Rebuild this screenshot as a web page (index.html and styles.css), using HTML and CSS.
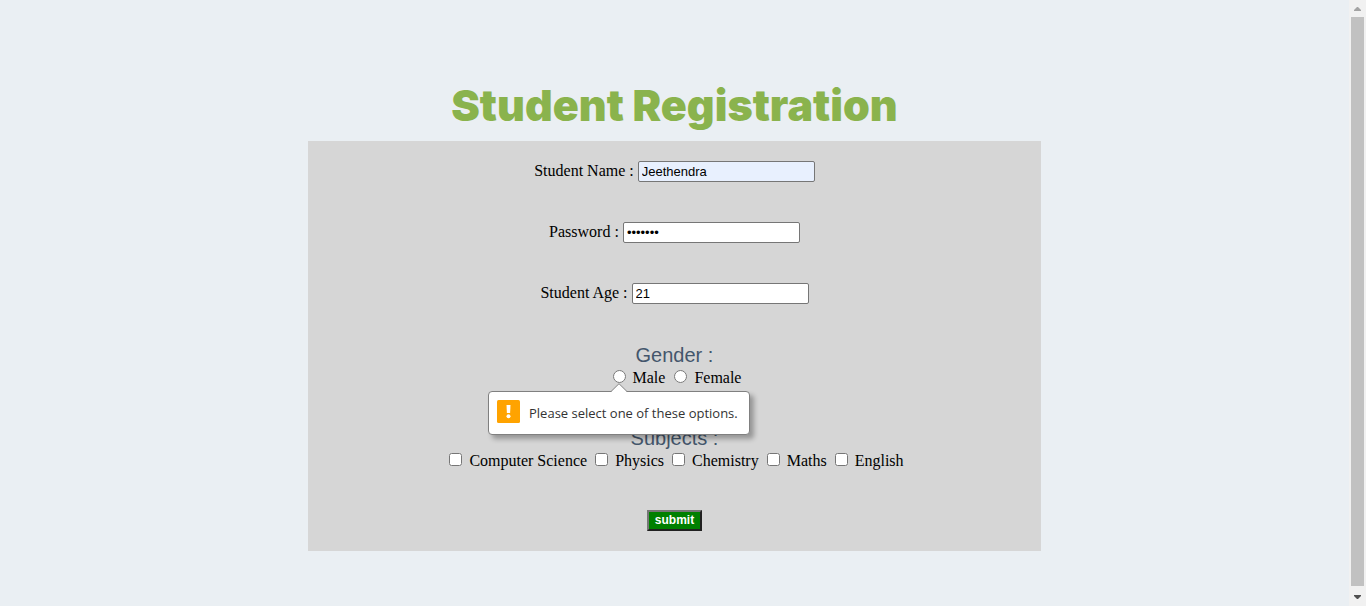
FILE: index.html
```html
<!DOCTYPE html>
<html lang="en">
<head>
<meta charset="utf-8">
<title>Student Registration</title>
<link rel="stylesheet" href="styles.css">
</head>
<body>
<div class="viewport">
  <main class="page">
    <h1 class="title">Student Registration</h1>
    <form class="form">
      <div class="field">
        <label for="name">Student Name :</label>
        <input class="text-input autofilled" id="name" type="text" value="Jeethendra">
      </div>
      <div class="field">
        <label for="password">Password :</label>
        <input class="text-input" id="password" type="password" value="1234567">
      </div>
      <div class="field">
        <label for="age">Student Age :</label>
        <input class="text-input" id="age" type="text" value="21">
      </div>
      <div class="group" role="radiogroup" aria-labelledby="gender-title">
        <div class="group-title" id="gender-title">Gender :</div>
        <div class="options">
          <span class="anchor">
            <input type="radio" name="gender" id="male">
            <span class="bubble" role="alert">
              <svg class="bubble-arrow" width="18" height="9" viewBox="0 0 18 9" aria-hidden="true">
                <path d="M1 9L9 1L17 9Z" fill="#fff"/>
                <path d="M1 8.5L9 .7L17 8.5" fill="none" stroke="#888"/>
              </svg>
              <svg class="bubble-icon" width="23" height="23" viewBox="0 0 23 23" aria-hidden="true">
                <rect width="23" height="23" rx="1.5" fill="#ffa300"/>
                <path d="M9.5 5H13.5L13.1 13H9.9Z" fill="#fff"/>
                <circle cx="11.5" cy="16.3" r="2" fill="#fff"/>
              </svg>
              <span>Please select one of these options.</span>
            </span>
          </span>
          <label for="male">Male</label>
          <input type="radio" name="gender" id="female">
          <label for="female">Female</label>
        </div>
      </div>
      <div class="group" role="group" aria-labelledby="subjects-title">
        <div class="group-title" id="subjects-title">Subjects :</div>
        <div class="options">
          <input type="checkbox" id="cs">
          <label for="cs">Computer Science</label>
          <input type="checkbox" id="physics">
          <label for="physics">Physics</label>
          <input type="checkbox" id="chemistry">
          <label for="chemistry">Chemistry</label>
          <input type="checkbox" id="maths">
          <label for="maths">Maths</label>
          <input type="checkbox" id="english">
          <label for="english">English</label>
        </div>
      </div>
      <button class="submit" type="button">submit</button>
    </form>
  </main>
  <div class="scrollbar" aria-hidden="true">
    <svg class="scroll-arrow" width="17" height="17" viewBox="0 0 17 17"><path d="M5 11V10L8 7H9L12 10V11Z" fill="#a3a3a3"/></svg>
    <div class="scroll-thumb"></div>
    <svg class="scroll-arrow" width="17" height="17" viewBox="0 0 17 17"><path d="M5 6V7L8 10H9L12 7V6Z" fill="#505050"/></svg>
  </div>
</div>
</body>
</html>
```
FILE: styles.css
```css
* {
  box-sizing: border-box;
}

body {
  margin: 0;
  background: #eaeff3;
  color: #000;
  font-family: "Liberation Serif", "Times New Roman", serif;
  font-size: 16px;
}

.viewport {
  display: flex;
  min-height: 100vh;
}

.page {
  flex: 1;
  display: flex;
  flex-direction: column;
  align-items: center;
  padding: 77px 8px 55px;
}

.title {
  margin: 0 0 8px;
  color: #8ab34d;
  font-family: "Arial Black", Inter, sans-serif;
  font-size: 43px;
  font-weight: 900;
  line-height: 56px;
}

.form {
  display: flex;
  flex-direction: column;
  align-items: center;
  gap: 40px;
  width: 55%;
  padding: 20px;
  background: #d6d6d6;
}

.field {
  height: 21px;
  white-space: nowrap;
}

.text-input {
  width: 177px;
  height: 21px;
  padding: 1px 3px;
  border: 1px solid #767676;
  border-radius: 2px;
  background: #fff;
  color: #000;
  font: 13px "Liberation Sans", Arial, sans-serif;
}

.autofilled {
  background: #e8f0fe;
}

.group {
  text-align: center;
}

.group-title {
  color: #44566c;
  font: 20px/23px "Liberation Sans", Arial, sans-serif;
}

.options {
  height: 20px;
  line-height: 20px;
  white-space: nowrap;
}

.anchor {
  position: relative;
}

.bubble {
  position: absolute;
  top: 22px;
  left: calc(50% - 1px);
  z-index: 1;
  display: flex;
  align-items: flex-start;
  gap: 9px;
  width: 262px;
  height: 44px;
  padding: 8px;
  transform: translateX(-50%);
  border: 1px solid #808080;
  border-radius: 4px;
  background: #fff;
  box-shadow: 4px 4px 5px rgba(0, 0, 0, 0.3);
  color: #333;
  font: 13px/26px "Open Sans", "Noto Sans", sans-serif;
}

.bubble-arrow {
  position: absolute;
  top: -9px;
  left: calc(50% - 9px);
}

.bubble-icon {
  flex: none;
}

.submit {
  height: 21px;
  padding: 1px 6px;
  border: 2px outset #767676;
  background: #008000;
  color: #fff;
  font: bold 12px/15px "Liberation Sans", Arial, sans-serif;
}

.scrollbar {
  display: flex;
  flex-direction: column;
  width: 17px;
  padding-right: 1px;
  background: #f1f1f1;
}

.scroll-arrow {
  flex: none;
}

.scroll-thumb {
  flex: 1;
  margin: 0 1px 3px 2px;
  background: #c1c1c1;
}
```
